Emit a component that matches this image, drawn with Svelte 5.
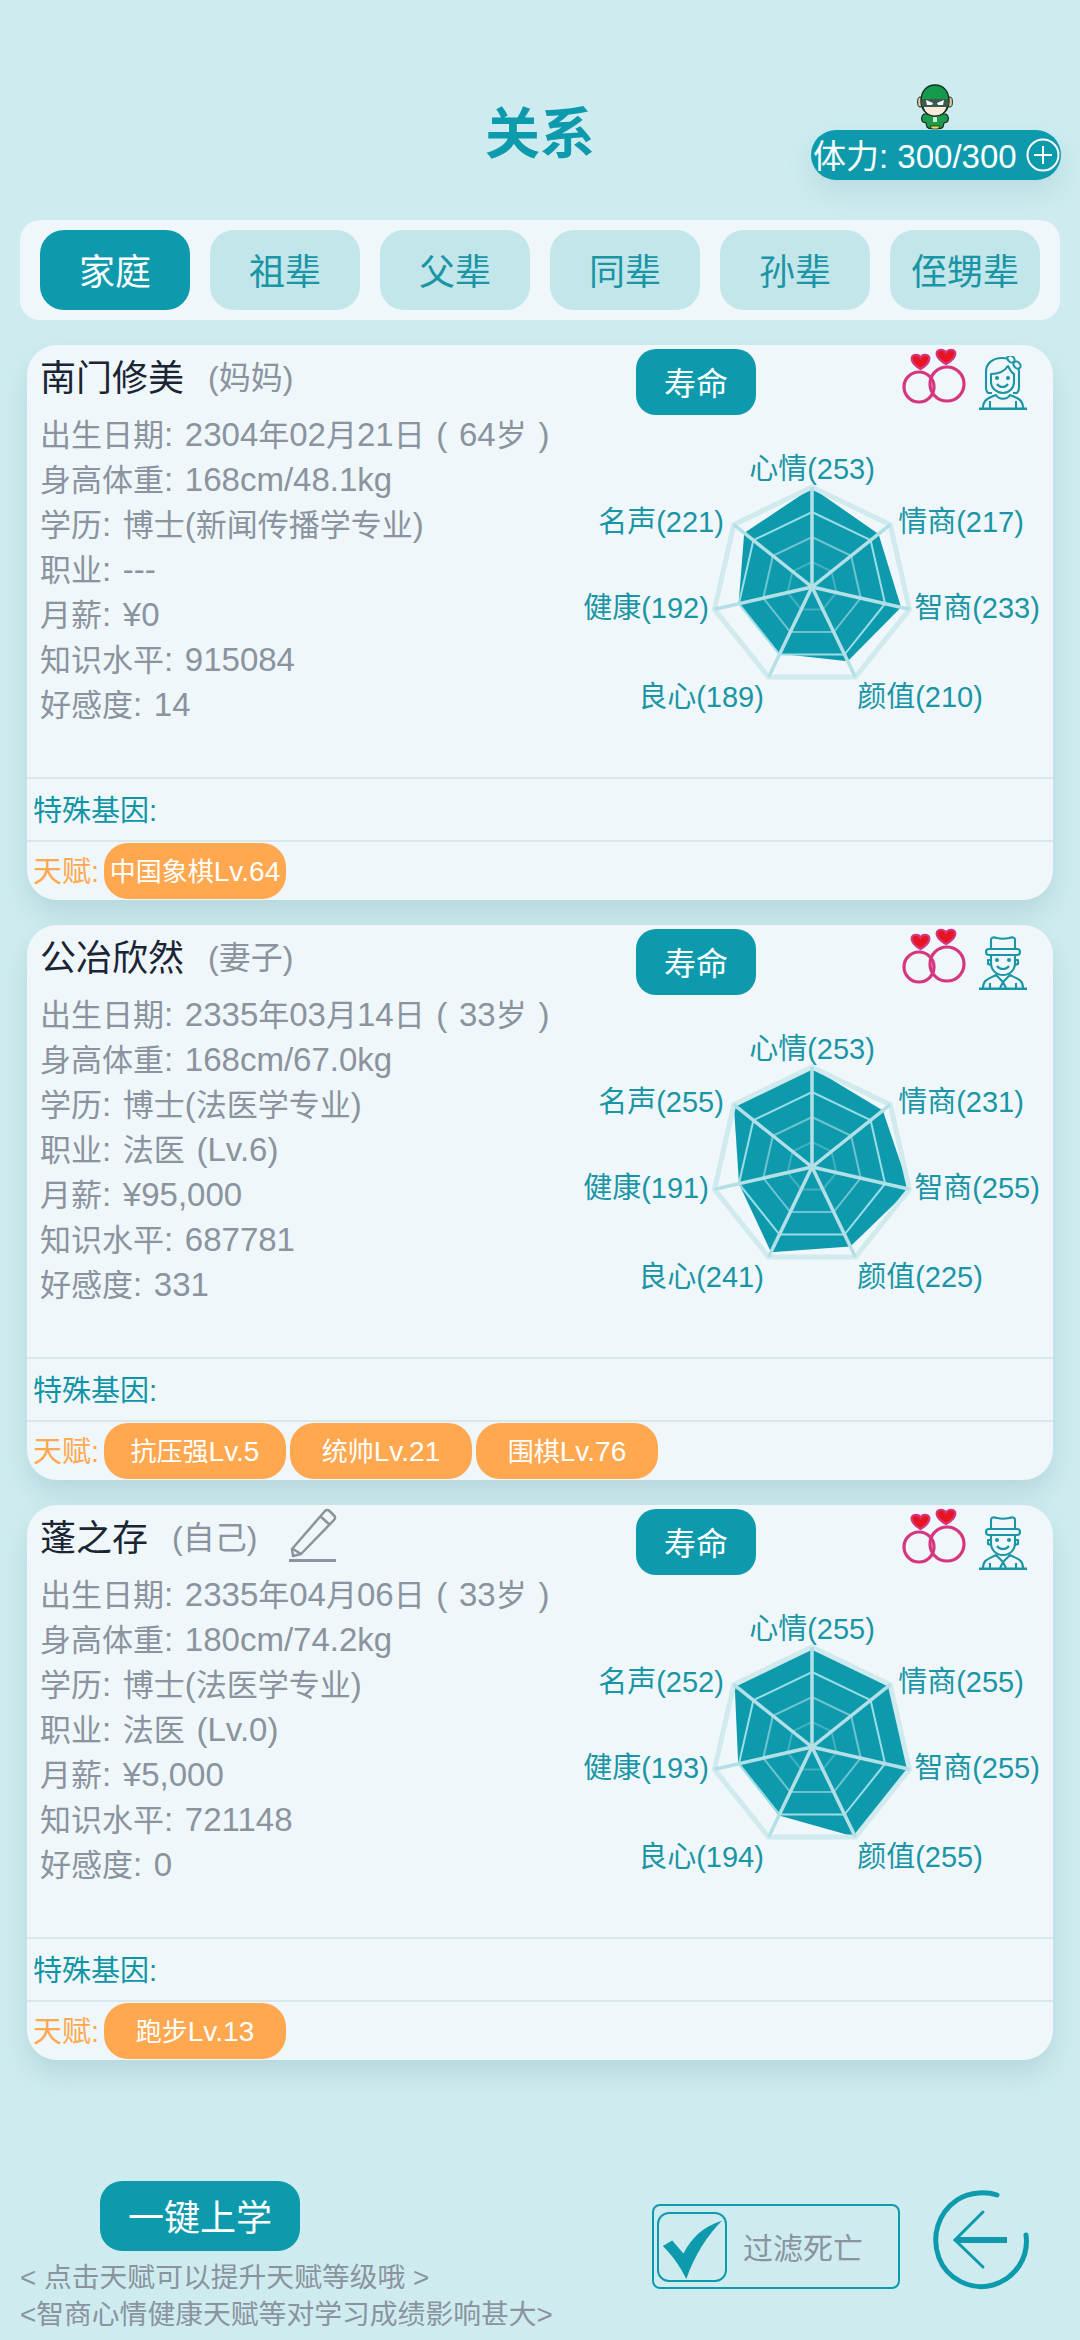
<script>
  const tabs = ['家庭', '祖辈', '父辈', '同辈', '孙辈', '侄甥辈'];
  const attrs = ['心情', '情商', '智商', '颜值', '良心', '健康', '名声'];
  // label centres, relative to the chart svg
  const labelPos = [
    [239, 39], [388, 92], [404, 178], [347, 267], [128, 267], [73, 178], [88, 92]
  ];
  const cx = 239;
  const cy = 157;
  const R = 100;

  const people = [
    {
      name: '南门修美', rel: '(妈妈)', icon: 'woman',
      lines: ['出生日期: 2304年02月21日 ( 64岁 )', '身高体重: 168cm/48.1kg', '学历: 博士(新闻传播学专业)', '职业: ---', '月薪: ¥0', '知识水平: 915084', '好感度: 14'],
      stats: [253, 217, 233, 210, 189, 192, 221],
      talents: ['中国象棋Lv.64']
    },
    {
      name: '公冶欣然', rel: '(妻子)', icon: 'man',
      lines: ['出生日期: 2335年03月14日 ( 33岁 )', '身高体重: 168cm/67.0kg', '学历: 博士(法医学专业)', '职业: 法医 (Lv.6)', '月薪: ¥95,000', '知识水平: 687781', '好感度: 331'],
      stats: [253, 231, 255, 225, 241, 191, 255],
      talents: ['抗压强Lv.5', '统帅Lv.21', '围棋Lv.76']
    },
    {
      name: '蓬之存', rel: '(自己)', icon: 'man', self: true,
      lines: ['出生日期: 2335年04月06日 ( 33岁 )', '身高体重: 180cm/74.2kg', '学历: 博士(法医学专业)', '职业: 法医 (Lv.0)', '月薪: ¥5,000', '知识水平: 721148', '好感度: 0'],
      stats: [255, 255, 255, 255, 194, 193, 252],
      talents: ['跑步Lv.13']
    }
  ];

  function point(i, r) {
    const a = (i * 2 * Math.PI) / 7;
    return [cx + r * Math.sin(a), cy - r * Math.cos(a)];
  }
  const ring = (r) => attrs.map((_, i) => point(i, r).map((n) => n.toFixed(1)).join(',')).join(' ');
  const dataPoly = (stats) => stats.map((v, i) => point(i, (v / 255) * R).map((n) => n.toFixed(1)).join(',')).join(' ');

  // chinese glyphs run a little smaller than the latin ones next to them
  const runs = (s) => s.match(/[\u4e00-\u9fff]+|[^\u4e00-\u9fff]+/g);
  const isCjk = (s) => /[\u4e00-\u9fff]/.test(s);
</script>

<div class="page">
  <header class="header">
    <h1>关系</h1>
    <div class="stamina">
      <svg class="hero" viewBox="0 0 36 46">
        <path d="M7 30c-3 2-3 6-1 8l3 1 1 4c2 2 5 2 8 1 3 1 6 1 8-1l1-4 3-1c2-2 2-6-1-8z" fill="#1e9a4f" stroke="#12301f" stroke-width="1.2" />
        <path d="M13 42h10l-2 3h-6z" fill="#e8e04a" stroke="#12301f" stroke-width=".8" />
        <rect x="16" y="33" width="4" height="5" fill="#cdeed8" />
        <ellipse cx="3" cy="18" rx="2.4" ry="5" fill="#e9c9a0" stroke="#12301f" />
        <ellipse cx="33" cy="18" rx="2.4" ry="5" fill="#e9c9a0" stroke="#12301f" />
        <path d="M18 1C9 1 4 8 4 17c0 9 6 15 14 15s14-6 14-15C32 8 27 1 18 1z" fill="#149a4c" stroke="#12301f" stroke-width="1.4" />
        <path d="M6 22h24c-1 6-6 10-12 10S7 28 6 22z" fill="#fbeadb" stroke="#12301f" />
        <path d="M5 15h26l1 5-2 3H6l-2-3z" fill="#3d5a4c" />
        <path d="M9 16l7 3-1 2h-5z M27 16l-7 3 1 2h5z" fill="#fff" />
      </svg>
      <span>体力: 300/300</span>
      <svg class="plus" viewBox="0 0 34 34">
        <circle cx="17" cy="17" r="15.5" fill="none" stroke="#fff" stroke-width="2" />
        <path d="M17 8v18M8 17h18" stroke="#fff" stroke-width="2" />
      </svg>
    </div>
  </header>

  <nav class="tabs">
    {#each tabs as t, i}
      <div class="tab" class:active={i === 0}>{t}</div>
    {/each}
  </nav>

  <main class="cards">
    {#each people as p}
      <section class="card">
        <div class="top">
          <div class="info">
            <div class="name-row">
              <span class="name">{p.name}</span>
              <span class="rel">{p.rel}</span>
              {#if p.self}
                <svg class="pencil" viewBox="0 0 48 54" fill="none" stroke="#8a939e" stroke-width="2.5">
                  <path d="M3 41l1 7 8-2L45 12c1.500-1.500 1.500-3 0-4.500L40.500 3c-1.500-1.500-3-1.500-4.500 0z" stroke-linejoin="round" />
                  <path d="M31 8l10 9M4 41l8 5" />
                  <path d="M0 52.500h47" stroke-width="3" />
                </svg>
              {/if}
            </div>
            {#each p.lines as l}
              <div class="line">
                {#each runs(l) as r}<span class:cjk={isCjk(r)}>{r}</span>{/each}
              </div>
            {/each}
          </div>

          <div class="side">
            <div class="side-head">
              <div class="life">寿命</div>
              <svg class="rings" viewBox="0 0 64 54" fill="none">
                <circle cx="16" cy="37" r="15" stroke="#d6357f" stroke-width="3.200" />
                <circle cx="44" cy="34" r="17" stroke="#d6357f" stroke-width="3.200" />
                <path d="M17.500 19C7 13 7 6 11.500 5c2.500-.6 5 .5 6 2.500 1-2 3.500-3.100 6-2.500 4.500 1 4.500 8-6 14z" fill="#e8141f" stroke="#d6357f" stroke-width="2.200" />
                <path d="M43 14C32 8 32 1 36.500 0c2.500-.6 5.500.5 6.500 2.500 1-2 4-3.100 6.500-2.500C54 1 54 8 43 14z" fill="#e8141f" stroke="#d6357f" stroke-width="2.200" />
              </svg>
              {#if p.icon === 'woman'}
                <svg class="person" viewBox="0 0 48 54" fill="none" stroke="#1a95a5" stroke-width="2.100" stroke-linejoin="round">
                  <path d="M13 37H9c-1-1-2-3-2-5V16C7 7 14 2 23 2c9 0 17 5 17 14v16c0 2-1 4-2 5h-4" />
                  <path d="M12 18c6 0 13-2 17-8 2 4 4 7 6 8v8c0 6-5 11-11 11S12 32 12 26z" />
                  <path d="M18 28c3 4 8 4 11 0" />
                  <circle cx="18" cy="22" r="1" fill="#1a95a5" />
                  <circle cx="29" cy="22" r="1" fill="#1a95a5" />
                  <ellipse cx="32" cy="3" rx="4" ry="3" transform="rotate(45 32 3)" fill="#eff7fa" />
                  <ellipse cx="38" cy="9" rx="4" ry="3" transform="rotate(45 38 9)" fill="#eff7fa" />
                  <path d="M4 52c0-8 5-10 13-13 3 5 11 5 14 0 8 3 13 5 13 13M11 52v-7M37 52v-7" />
                  <path d="M0 52.800h48" stroke-width="2.400" />
                </svg>
              {:else}
                <svg class="person" viewBox="0 0 48 54" fill="none" stroke="#1a95a5" stroke-width="2.100" stroke-linejoin="round">
                  <path d="M12 13V4c0-3 3-3 6-2 4 1 8 1 12 0 3-1 6-1 6 2v9" />
                  <path d="M10 13h28c4 0 4 6 0 6H10c-4 0-4-6 0-6z" />
                  <path d="M12 19v8c0 7 5 12 12 12s12-5 12-12v-8M12 24H9v4l3 1M36 24h3v4l-3 1" />
                  <path d="M18 30c3 4 9 4 12 0" />
                  <circle cx="18" cy="24" r="1" fill="#1a95a5" />
                  <circle cx="30" cy="24" r="1" fill="#1a95a5" />
                  <path d="M4 52c0-8 5-9 13-13l7 7 7-7c8 4 13 5 13 13M24 46l-3 6M24 46l3 6M11 52v-5M37 52v-5" />
                  <path d="M0 52.800h48" stroke-width="2.400" />
                </svg>
              {/if}
            </div>
            <svg class="chart" viewBox="0 0 480 347">
              <polygon points={dataPoly(p.stats)} fill="#0e9aad" />
              <polygon points={ring(100)} class="ring outer" />
              <polygon points={ring(75)} class="ring r3" />
              <polygon points={ring(50)} class="ring r2" />
              <polygon points={ring(25)} class="ring r1" />
              {#each attrs as _, i}
                {@const q = point(i, 100)}
                <line x1={cx} y1={cy} x2={q[0]} y2={q[1]} class="spoke" />
              {/each}
              {#each attrs as a, i}
                <text x={labelPos[i][0]} y={labelPos[i][1]} class="label" text-anchor="middle" dominant-baseline="central">{a}({p.stats[i]})</text>
              {/each}
            </svg>
          </div>
        </div>

        <div class="row gene"><span>特殊基因:</span></div>
        <div class="row talent">
          <span class="talent-label">天赋:</span>
          {#each p.talents as t}
            <span class="chip">
              <span class="chip-text">{#each runs(t) as r}<span class:cjk={isCjk(r)}>{r}</span>{/each}</span>
            </span>
          {/each}
        </div>
      </section>
    {/each}
  </main>

  <footer class="footer">
    <div class="left">
      <div class="study">一键上学</div>
      <p class="hint">&lt; 点击天赋可以提升天赋等级哦 &gt;</p>
      <p class="hint">&lt;智商心情健康天赋等对学习成绩影响甚大&gt;</p>
    </div>
    <div class="right">
      <div class="filter">
        <div class="check">
          <svg viewBox="0 0 70 70">
            <path d="M4 34l10-6 12 14C34 26 46 14 67 7c-15 15-29 36-38 62C22 55 14 44 4 34z" fill="#0e9aad" />
          </svg>
        </div>
        <span>过滤死亡</span>
      </div>
      <svg class="back" viewBox="0 0 100 100" fill="none" stroke="#0e9aad" stroke-linecap="round">
        <path d="M66 5C57 2 40 1 26 10 7 23 0 46 8 68c8 21 32 33 54 27 23-7 36-28 33-50" stroke-width="5" />
        <path d="M52 22L24 50l28 27" stroke-width="3" />
        <path d="M26 50h50" stroke-width="6" stroke-linecap="butt" />
      </svg>
    </div>
  </footer>
</div>

<style>
  :global(body) {
    margin: 0;
  }

  * {
    box-sizing: border-box;
  }

  .page {
    width: 1080px;
    height: 2340px;
    overflow: hidden;
    background: #ceecf0;
    font-family: "Liberation Sans", "Noto Sans CJK SC", sans-serif;
  }

  .header {
    position: relative;
    height: 220px;
    padding-top: 98px;
  }

  h1 {
    margin: 0;
    text-align: center;
    font-size: 55px;
    line-height: 72px;
    font-weight: 700;
    color: #0e9aad;
  }

  .stamina {
    position: absolute;
    left: 811px;
    top: 130px;
    width: 250px;
    height: 50px;
    padding: 0 0 3px 2px;
    display: flex;
    align-items: center;
    gap: 9px;
    border-radius: 25px;
    background: #0e9aad;
    color: #fff;
    font-size: 33px;
    box-shadow: 0 12px 28px rgba(60, 120, 135, 0.14);
  }

  .hero {
    position: absolute;
    left: 106px;
    top: -46px;
    width: 36px;
    height: 46px;
  }

  .plus {
    width: 34px;
    height: 34px;
    flex: none;
    margin-top: 3px;
  }

  .tabs {
    margin: 0 20px;
    height: 100px;
    padding: 10px 20px;
    display: flex;
    gap: 20px;
    border-radius: 20px;
    background: #eff7fa;
  }

  .tab {
    width: 150px;
    padding-bottom: 2px;
    display: flex;
    align-items: center;
    justify-content: center;
    border-radius: 24px;
    background: #c3e6eb;
    color: #1a95a5;
    font-size: 36px;
  }

  .tab.active {
    background: #0e9aad;
    color: #fff;
  }

  .cards {
    padding: 25px 27px 0;
    display: flex;
    flex-direction: column;
    gap: 25px;
  }

  .card {
    height: 555px;
    display: flex;
    flex-direction: column;
    border-radius: 30px;
    background: #eff7fa;
    box-shadow: 0 14px 26px rgba(70, 125, 140, 0.18);
  }

  .top {
    height: 432px;
    display: flex;
    justify-content: space-between;
  }

  .info {
    padding: 5px 0 0 13px;
  }

  .name-row {
    height: 50px;
    margin-bottom: 12px;
    display: flex;
    align-items: center;
  }

  .name {
    font-size: 36px;
    color: #1a2433;
  }

  .rel {
    margin-left: 24px;
    font-size: 32px;
    color: #8a939e;
  }

  .pencil {
    width: 48px;
    height: 54px;
    margin-left: 32px;
  }

  .line {
    font-size: 33px;
    word-spacing: 2.500px;
    line-height: 45px;
    height: 45px;
    color: #8a939e;
    white-space: nowrap;
  }

  .line .cjk {
    font-size: 31px;
  }

  .side {
    width: 480px;
  }

  .side-head {
    height: 85px;
    padding-left: 63px;
    display: flex;
    align-items: flex-start;
  }

  .life {
    width: 120px;
    height: 66px;
    margin-top: 4px;
    padding-bottom: 3px;
    display: flex;
    align-items: center;
    justify-content: center;
    border-radius: 20px;
    background: #0e9aad;
    color: #fff;
    font-size: 32px;
  }

  .rings {
    width: 64px;
    height: 54px;
    margin: 5px 0 0 147px;
    overflow: visible;
  }

  .person {
    width: 48px;
    height: 54px;
    margin: 11px 0 0 12px;
  }

  .chart {
    display: block;
    width: 480px;
    height: 347px;
  }

  .ring {
    fill: none;
    stroke: #bfe6eb;
  }

  .outer {
    stroke: #d0eaee;
    stroke-width: 5;
  }

  .r3 {
    stroke-width: 2;
    stroke: #9adde5;
  }

  .r2 {
    stroke-width: 2;
    opacity: 0.55;
  }

  .r1 {
    stroke-width: 2;
    opacity: 0.3;
  }

  .spoke {
    stroke: #b3e0e6;
    stroke-width: 3.500;
  }

  .label {
    font-size: 29px;
    fill: #1a95a5;
  }

  .row {
    display: flex;
    align-items: center;
    padding-left: 6px;
    border-top: 2px solid #d8e8ec;
    font-size: 29px;
  }

  .gene {
    height: 63px;
    padding-bottom: 4px;
    color: #0e94a6;
  }

  .talent {
    height: 60px;
    gap: 4px;
  }

  .talent-label {
    width: 67px;
    margin-bottom: 4px;
    white-space: nowrap;
    color: #ffa84f;
  }

  .chip {
    width: 182px;
    height: 56px;
    display: flex;
    align-items: center;
    justify-content: center;
    border-radius: 24px;
    background: #ffa84f;
    color: #fff;
    font-size: 28px;
  }

  .chip-text {
    margin-bottom: 3px;
  }

  .chip .cjk {
    font-size: 26px;
  }

  .footer {
    margin-top: 121px;
    display: flex;
    justify-content: space-between;
  }

  .left {
    padding-left: 20px;
  }

  .study {
    width: 200px;
    height: 70px;
    margin: 0 0 8px 80px;
    padding-bottom: 2px;
    display: flex;
    align-items: center;
    justify-content: center;
    border-radius: 22px;
    background: #0e9aad;
    color: #fff;
    font-size: 36px;
  }

  .hint {
    margin: 0;
    font-size: 27.800px;
    line-height: 37px;
    color: #8a939e;
    white-space: nowrap;
  }

  .right {
    display: flex;
    align-items: flex-start;
    padding: 9px 49px 0 0;
  }

  .filter {
    width: 248px;
    height: 85px;
    margin-top: 14px;
    padding: 6px 0 0 3px;
    display: flex;
    gap: 16px;
    border: 2px solid #0e9aad;
    border-radius: 8px;
    color: #8a939e;
    font-size: 30px;
  }

  .filter span {
    margin-top: 12px;
  }

  .check {
    width: 70px;
    height: 70px;
    border: 2px solid #0e9aad;
    border-radius: 12px;
  }

  .check svg {
    display: block;
    width: 66px;
    height: 66px;
  }

  .back {
    width: 100px;
    height: 100px;
    margin-left: 31px;
  }
</style>
